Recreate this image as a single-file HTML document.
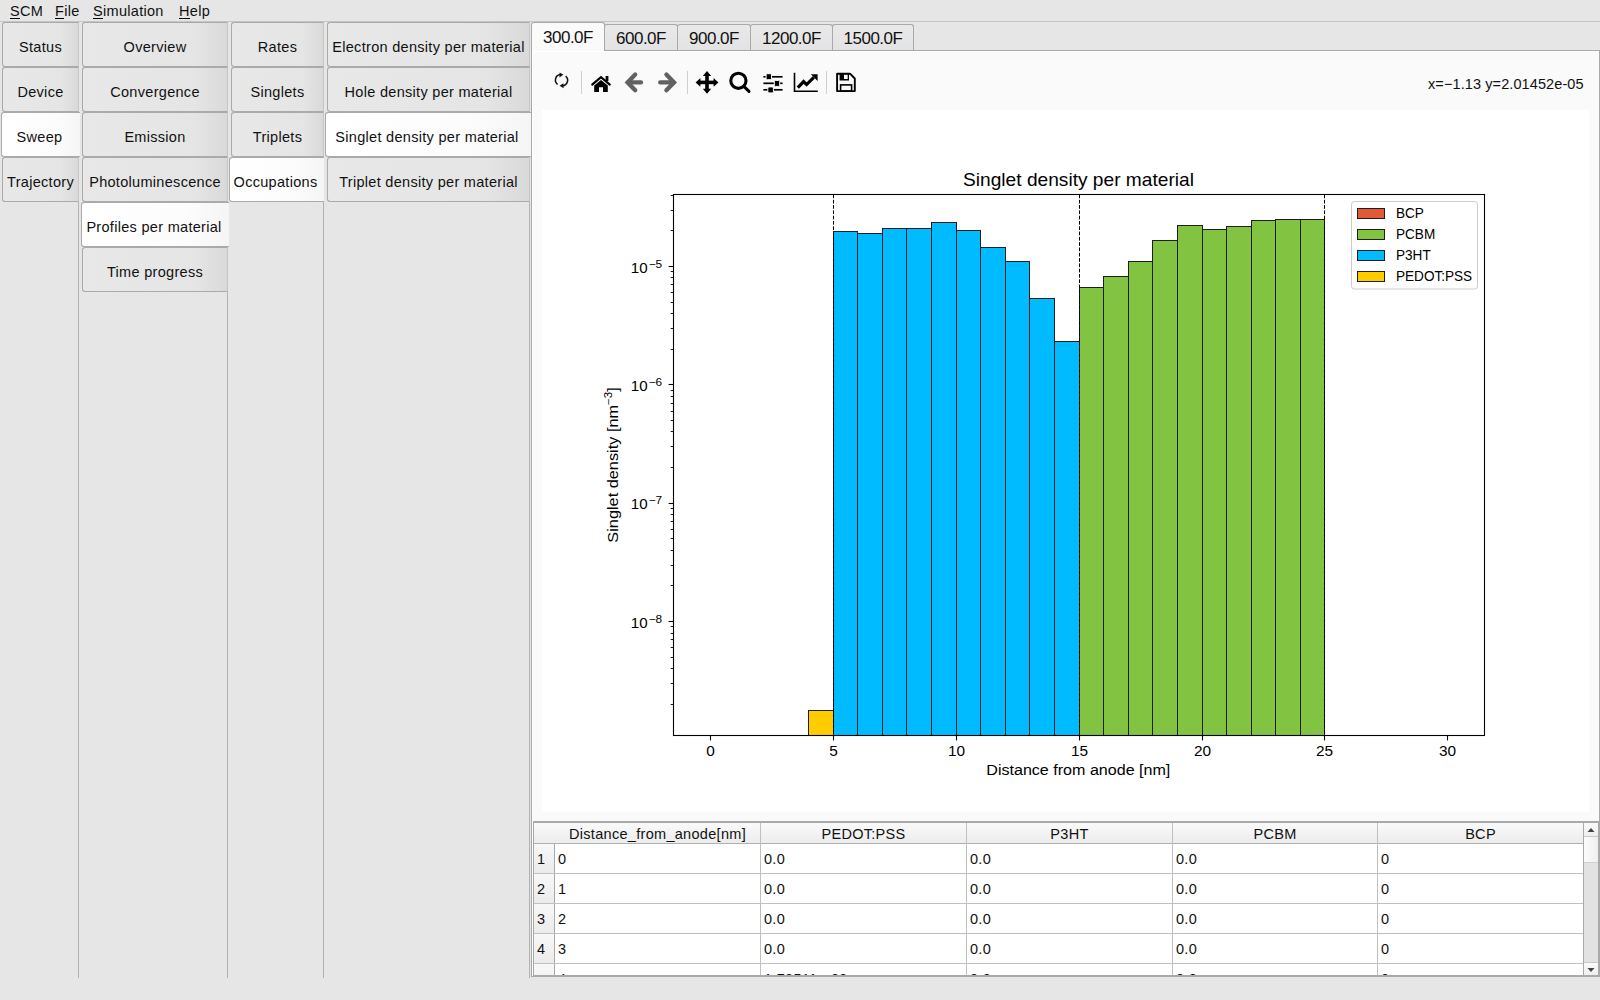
<!DOCTYPE html><html><head><meta charset="utf-8"><style>
*{margin:0;padding:0;box-sizing:border-box}
html,body{width:1600px;height:1000px;overflow:hidden;background:#e6e6e6;font-family:"Liberation Sans",sans-serif;color:#111}
.a{position:absolute}
.menu{position:absolute;font-size:14.5px;letter-spacing:0.3px;top:3px;height:16px;line-height:16px;white-space:nowrap}
.menu u{text-decoration:none;border-bottom:1.5px solid #000;display:inline-block;line-height:14px}
.vl{position:absolute;width:1px;background:#b2b2b2}
.tab{position:absolute;height:45px;border:1px solid #aaaaaa;border-right-color:#c6c6c6;border-radius:3px 0 0 3px;background:linear-gradient(to right,#e8e8e8 0%,#e5e5e5 78%,#d9d9d9 100%);font-size:14.5px;letter-spacing:0.3px;text-align:center;line-height:49px;white-space:nowrap}
.tab.sel{background:linear-gradient(to right,#ffffff 0%,#fcfcfc 70%,#f5f5f5 100%);border-right:none;padding-right:3px}
.ttab{position:absolute;top:24px;height:27px;border:1px solid #a9a9a9;border-bottom:none;border-radius:3px 3px 0 0;background:linear-gradient(#e9e9e9,#e3e3e3);font-size:17px;letter-spacing:-0.5px;text-align:center;line-height:28px;white-space:nowrap}
.ttab.sel{top:22px;height:29px;background:#fafafa;line-height:30px;z-index:3}
.hd{position:absolute;top:823px;height:20px;font-size:14.5px;letter-spacing:0.3px;line-height:21px;text-align:center;white-space:nowrap;background:linear-gradient(#fafafa,#ececec)}
.cell{position:absolute;font-size:14.5px;letter-spacing:0.3px;white-space:nowrap;line-height:16px}
svg text{font-family:"Liberation Sans",sans-serif;fill:#000}
</style></head><body>
<div class="menu" style="left:10px"><u>S</u>CM</div>
<div class="menu" style="left:55px"><u>F</u>ile</div>
<div class="menu" style="left:93px"><u>S</u>imulation</div>
<div class="menu" style="left:179px"><u>H</u>elp</div>
<div class="a" style="left:0;top:21px;width:1600px;height:1px;background:#c4c4c4"></div>
<div class="vl" style="left:78px;top:22px;height:956px"></div>
<div class="vl" style="left:227px;top:22px;height:956px"></div>
<div class="vl" style="left:323px;top:22px;height:956px"></div>
<div class="vl" style="left:529px;top:22px;height:956px"></div>
<div class="tab" style="left:2px;top:22px;width:77px">Status</div>
<div class="tab" style="left:2px;top:67px;width:77px">Device</div>
<div class="tab sel" style="left:1px;top:112px;width:79px;z-index:2">Sweep</div>
<div class="tab" style="left:2px;top:157px;width:77px">Trajectory</div>
<div class="tab" style="left:82px;top:22px;width:146px">Overview</div>
<div class="tab" style="left:82px;top:67px;width:146px">Convergence</div>
<div class="tab" style="left:82px;top:112px;width:146px">Emission</div>
<div class="tab" style="left:82px;top:157px;width:146px">Photoluminescence</div>
<div class="tab sel" style="left:81px;top:202px;width:148px;z-index:2">Profiles per material</div>
<div class="tab" style="left:82px;top:247px;width:146px">Time progress</div>
<div class="tab" style="left:231px;top:22px;width:93px">Rates</div>
<div class="tab" style="left:231px;top:67px;width:93px">Singlets</div>
<div class="tab" style="left:231px;top:112px;width:93px">Triplets</div>
<div class="tab sel" style="left:229px;top:157px;width:95px;z-index:2">Occupations</div>
<div class="tab" style="left:327px;top:22px;width:203px">Electron density per material</div>
<div class="tab" style="left:327px;top:67px;width:203px">Hole density per material</div>
<div class="tab sel" style="left:325px;top:112px;width:206px;z-index:2">Singlet density per material</div>
<div class="tab" style="left:327px;top:157px;width:203px">Triplet density per material</div>
<div class="ttab sel" style="left:531px;width:74px">300.0F</div>
<div class="ttab" style="left:604px;width:74px">600.0F</div>
<div class="ttab" style="left:677px;width:74px">900.0F</div>
<div class="ttab" style="left:750px;width:83px">1200.0F</div>
<div class="ttab" style="left:832px;width:82px">1500.0F</div>
<div class="a" style="left:531px;top:50px;width:1069px;height:927px;border:1px solid #a9a9a9;background:#fafafa;box-shadow:inset 1px 1px 0 #fff"></div>
<div class="a" style="left:542px;top:110px;width:1047px;height:702px;background:#fff"></div>
<div class="a" style="left:1428px;top:76px;font-size:14.5px;letter-spacing:0.1px;line-height:16px;white-space:nowrap">x=−1.13 y=2.01452e-05</div>
<svg class="a" style="left:0;top:0" width="1600" height="1000" viewBox="0 0 1600 1000"><g id="toolbar"><g fill="none" stroke="#111" stroke-width="1.5"><path d="M560.5 74.6 A5.4 5.4 0 0 0 557.6 84.3"/><path d="M565.6 76.2 A5.4 5.4 0 0 1 562.5 85.8"/></g><path d="M559.6 72.4 L563.4 74.8 L559.4 77.4 Z" fill="#111"/><path d="M563.4 83.2 L559.6 85.8 L563.6 88.2 Z" fill="#111"/><line x1="581.5" y1="71" x2="581.5" y2="94" stroke="#cfcfcf" stroke-width="1"/><line x1="687.5" y1="71" x2="687.5" y2="94" stroke="#cfcfcf" stroke-width="1"/><line x1="826.5" y1="71" x2="826.5" y2="94" stroke="#cfcfcf" stroke-width="1"/><polyline points="592.2,84.6 601,77.2 609.8,84.6" fill="none" stroke="#000" stroke-width="2.1" stroke-linecap="round"/><rect x="605.6" y="76" width="2.8" height="5" fill="#000"/><path d="M594.2 92 L594.2 85.6 L601 80 L607.8 85.6 L607.8 92 L603 92 L603 87.3 L599 87.3 L599 92 Z" fill="#000"/><g stroke="#616161" stroke-width="4.3" stroke-linecap="round" fill="none"><polyline points="635.2,74.6 627.6,82.4 635.2,90.2" stroke-linejoin="miter"/><line x1="628" y1="82.4" x2="641" y2="82.4"/><polyline points="666.4,74.6 674,82.4 666.4,90.2" stroke-linejoin="miter"/><line x1="673.6" y1="82.4" x2="660.2" y2="82.4"/></g><g fill="#000"><rect x="705.2" y="75" width="3.6" height="15"/><rect x="699.5" y="80.6" width="15" height="3.6"/><path d="M702.8 76 L711.2 76 L707 71 Z M702.8 88.8 L711.2 88.8 L707 93.8 Z M700.4 78 L700.4 86.8 L695.6 82.4 Z M713.6 78 L713.6 86.8 L718.4 82.4 Z"/></g><circle cx="738.4" cy="80.8" r="7.6" fill="none" stroke="#000" stroke-width="3.1"/><line x1="743.8" y1="86.4" x2="749" y2="91.4" stroke="#000" stroke-width="3" stroke-linecap="round"/><g stroke="#000" stroke-width="1.7"><line x1="763.4" y1="76.8" x2="782.6" y2="76.8"/><line x1="763.4" y1="83.3" x2="782.6" y2="83.3"/><line x1="763.4" y1="89.8" x2="782.6" y2="89.8"/></g><g fill="#000" stroke="#fafafa" stroke-width="1"><rect x="766.1" y="73.7" width="5.4" height="6" rx="1.2"/><rect x="774.3" y="80.4" width="5.4" height="6" rx="1.2"/><rect x="767.8" y="86.9" width="5.6" height="6" rx="1.2"/></g><path d="M794.5 72.8 L794.5 91.2 L817.8 91.2" fill="none" stroke="#000" stroke-width="1.6"/><polyline points="797.8,87.6 803.6,81.6 806.6,84.6 813.8,77.4" fill="none" stroke="#000" stroke-width="3.2" stroke-linejoin="miter"/><path d="M810.8 74.2 L817.6 74.2 L817.6 81 Z" fill="#000"/><path d="M837.1 73.7 L850 73.7 L854.8 78.5 L854.8 91.1 L837.1 91.1 Z" fill="none" stroke="#000" stroke-width="1.9" stroke-linejoin="round"/><path d="M839.6 73.5 L849 73.5 L849 80.6 L839.6 80.6 Z M844 74.3 L844 79.1 L847.7 79.1 L847.7 74.3 Z" fill="#000" fill-rule="evenodd"/><rect x="840.6" y="84.9" width="11" height="6.2" fill="none" stroke="#000" stroke-width="1.6"/></g><clipPath id="ax"><rect x="672.82" y="194.5" width="811.47" height="540.80"/></clipPath><g clip-path="url(#ax)"><rect x="808.5" y="710.5" width="25.0" height="29.80" fill="#ffcc00" stroke="#1e1e1e" stroke-width="1"/><rect x="833.5" y="231.5" width="24.0" height="508.80" fill="#00bbff" stroke="#1e1e1e" stroke-width="1"/><rect x="857.5" y="233.5" width="25.0" height="506.80" fill="#00bbff" stroke="#1e1e1e" stroke-width="1"/><rect x="882.5" y="228.5" width="24.0" height="511.80" fill="#00bbff" stroke="#1e1e1e" stroke-width="1"/><rect x="906.5" y="228.5" width="25.0" height="511.80" fill="#00bbff" stroke="#1e1e1e" stroke-width="1"/><rect x="931.5" y="222.5" width="25.0" height="517.80" fill="#00bbff" stroke="#1e1e1e" stroke-width="1"/><rect x="956.5" y="230.5" width="24.0" height="509.80" fill="#00bbff" stroke="#1e1e1e" stroke-width="1"/><rect x="980.5" y="247.5" width="25.0" height="492.80" fill="#00bbff" stroke="#1e1e1e" stroke-width="1"/><rect x="1005.5" y="261.5" width="24.0" height="478.80" fill="#00bbff" stroke="#1e1e1e" stroke-width="1"/><rect x="1029.5" y="298.5" width="25.0" height="441.80" fill="#00bbff" stroke="#1e1e1e" stroke-width="1"/><rect x="1054.5" y="341.5" width="25.0" height="398.80" fill="#00bbff" stroke="#1e1e1e" stroke-width="1"/><rect x="1079.5" y="287.5" width="24.0" height="452.80" fill="#82c341" stroke="#1e1e1e" stroke-width="1"/><rect x="1103.5" y="276.5" width="25.0" height="463.80" fill="#82c341" stroke="#1e1e1e" stroke-width="1"/><rect x="1128.5" y="261.5" width="24.0" height="478.80" fill="#82c341" stroke="#1e1e1e" stroke-width="1"/><rect x="1152.5" y="240.5" width="25.0" height="499.80" fill="#82c341" stroke="#1e1e1e" stroke-width="1"/><rect x="1177.5" y="225.5" width="25.0" height="514.80" fill="#82c341" stroke="#1e1e1e" stroke-width="1"/><rect x="1202.5" y="229.5" width="24.0" height="510.80" fill="#82c341" stroke="#1e1e1e" stroke-width="1"/><rect x="1226.5" y="226.5" width="25.0" height="513.80" fill="#82c341" stroke="#1e1e1e" stroke-width="1"/><rect x="1251.5" y="220.5" width="24.0" height="519.80" fill="#82c341" stroke="#1e1e1e" stroke-width="1"/><rect x="1275.5" y="219.5" width="25.0" height="520.80" fill="#82c341" stroke="#1e1e1e" stroke-width="1"/><rect x="1300.5" y="219.5" width="24.0" height="520.80" fill="#82c341" stroke="#1e1e1e" stroke-width="1"/><line x1="833.5" y1="194.5" x2="833.5" y2="735.3" stroke="#000" stroke-width="1" stroke-dasharray="3.7,1.6"/><line x1="1079.5" y1="194.5" x2="1079.5" y2="735.3" stroke="#000" stroke-width="1" stroke-dasharray="3.7,1.6"/><line x1="1324.5" y1="194.5" x2="1324.5" y2="735.3" stroke="#000" stroke-width="1" stroke-dasharray="3.7,1.6"/></g><rect x="673.5" y="194.5" width="811" height="541" fill="none" stroke="#000" stroke-width="1.1"/><line x1="710.5" y1="735.5" x2="710.5" y2="740.4" stroke="#000" stroke-width="1.1"/><text transform="translate(710.5,756) scale(1.1,1)" font-size="14" text-anchor="middle">0</text><line x1="833.5" y1="735.5" x2="833.5" y2="740.4" stroke="#000" stroke-width="1.1"/><text transform="translate(833.5,756) scale(1.1,1)" font-size="14" text-anchor="middle">5</text><line x1="956.5" y1="735.5" x2="956.5" y2="740.4" stroke="#000" stroke-width="1.1"/><text transform="translate(956.5,756) scale(1.1,1)" font-size="14" text-anchor="middle">10</text><line x1="1079.5" y1="735.5" x2="1079.5" y2="740.4" stroke="#000" stroke-width="1.1"/><text transform="translate(1079.5,756) scale(1.1,1)" font-size="14" text-anchor="middle">15</text><line x1="1202.5" y1="735.5" x2="1202.5" y2="740.4" stroke="#000" stroke-width="1.1"/><text transform="translate(1202.5,756) scale(1.1,1)" font-size="14" text-anchor="middle">20</text><line x1="1324.5" y1="735.5" x2="1324.5" y2="740.4" stroke="#000" stroke-width="1.1"/><text transform="translate(1324.5,756) scale(1.1,1)" font-size="14" text-anchor="middle">25</text><line x1="1447.5" y1="735.5" x2="1447.5" y2="740.4" stroke="#000" stroke-width="1.1"/><text transform="translate(1447.5,756) scale(1.1,1)" font-size="14" text-anchor="middle">30</text><line x1="670.7" y1="704.5" x2="673.5" y2="704.5" stroke="#000" stroke-width="0.9"/><line x1="670.7" y1="683.5" x2="673.5" y2="683.5" stroke="#000" stroke-width="0.9"/><line x1="670.7" y1="668.5" x2="673.5" y2="668.5" stroke="#000" stroke-width="0.9"/><line x1="670.7" y1="657.5" x2="673.5" y2="657.5" stroke="#000" stroke-width="0.9"/><line x1="670.7" y1="647.5" x2="673.5" y2="647.5" stroke="#000" stroke-width="0.9"/><line x1="670.7" y1="639.5" x2="673.5" y2="639.5" stroke="#000" stroke-width="0.9"/><line x1="670.7" y1="633.5" x2="673.5" y2="633.5" stroke="#000" stroke-width="0.9"/><line x1="670.7" y1="626.5" x2="673.5" y2="626.5" stroke="#000" stroke-width="0.9"/><line x1="668.6" y1="621.5" x2="673.5" y2="621.5" stroke="#000" stroke-width="1.1"/><text transform="translate(647.6,627.74) scale(1.08,1)" font-size="14" text-anchor="end">10</text><text transform="translate(662.2,622.74) scale(1.12,1)" font-size="10.6" text-anchor="end">−8</text><line x1="670.7" y1="585.5" x2="673.5" y2="585.5" stroke="#000" stroke-width="0.9"/><line x1="670.7" y1="565.5" x2="673.5" y2="565.5" stroke="#000" stroke-width="0.9"/><line x1="670.7" y1="550.5" x2="673.5" y2="550.5" stroke="#000" stroke-width="0.9"/><line x1="670.7" y1="538.5" x2="673.5" y2="538.5" stroke="#000" stroke-width="0.9"/><line x1="670.7" y1="529.5" x2="673.5" y2="529.5" stroke="#000" stroke-width="0.9"/><line x1="670.7" y1="521.5" x2="673.5" y2="521.5" stroke="#000" stroke-width="0.9"/><line x1="670.7" y1="514.5" x2="673.5" y2="514.5" stroke="#000" stroke-width="0.9"/><line x1="670.7" y1="508.5" x2="673.5" y2="508.5" stroke="#000" stroke-width="0.9"/><line x1="668.6" y1="503.5" x2="673.5" y2="503.5" stroke="#000" stroke-width="1.1"/><text transform="translate(647.6,509.40) scale(1.08,1)" font-size="14" text-anchor="end">10</text><text transform="translate(662.2,504.40) scale(1.12,1)" font-size="10.6" text-anchor="end">−7</text><line x1="670.7" y1="467.5" x2="673.5" y2="467.5" stroke="#000" stroke-width="0.9"/><line x1="670.7" y1="446.5" x2="673.5" y2="446.5" stroke="#000" stroke-width="0.9"/><line x1="670.7" y1="431.5" x2="673.5" y2="431.5" stroke="#000" stroke-width="0.9"/><line x1="670.7" y1="420.5" x2="673.5" y2="420.5" stroke="#000" stroke-width="0.9"/><line x1="670.7" y1="411.5" x2="673.5" y2="411.5" stroke="#000" stroke-width="0.9"/><line x1="670.7" y1="403.5" x2="673.5" y2="403.5" stroke="#000" stroke-width="0.9"/><line x1="670.7" y1="396.5" x2="673.5" y2="396.5" stroke="#000" stroke-width="0.9"/><line x1="670.7" y1="390.5" x2="673.5" y2="390.5" stroke="#000" stroke-width="0.9"/><line x1="668.6" y1="384.5" x2="673.5" y2="384.5" stroke="#000" stroke-width="1.1"/><text transform="translate(647.6,391.06) scale(1.08,1)" font-size="14" text-anchor="end">10</text><text transform="translate(662.2,386.06) scale(1.12,1)" font-size="10.6" text-anchor="end">−6</text><line x1="670.7" y1="349.5" x2="673.5" y2="349.5" stroke="#000" stroke-width="0.9"/><line x1="670.7" y1="328.5" x2="673.5" y2="328.5" stroke="#000" stroke-width="0.9"/><line x1="670.7" y1="313.5" x2="673.5" y2="313.5" stroke="#000" stroke-width="0.9"/><line x1="670.7" y1="302.5" x2="673.5" y2="302.5" stroke="#000" stroke-width="0.9"/><line x1="670.7" y1="292.5" x2="673.5" y2="292.5" stroke="#000" stroke-width="0.9"/><line x1="670.7" y1="284.5" x2="673.5" y2="284.5" stroke="#000" stroke-width="0.9"/><line x1="670.7" y1="277.5" x2="673.5" y2="277.5" stroke="#000" stroke-width="0.9"/><line x1="670.7" y1="271.5" x2="673.5" y2="271.5" stroke="#000" stroke-width="0.9"/><line x1="668.6" y1="266.5" x2="673.5" y2="266.5" stroke="#000" stroke-width="1.1"/><text transform="translate(647.6,272.72) scale(1.08,1)" font-size="14" text-anchor="end">10</text><text transform="translate(662.2,267.72) scale(1.12,1)" font-size="10.6" text-anchor="end">−5</text><line x1="670.7" y1="230.5" x2="673.5" y2="230.5" stroke="#000" stroke-width="0.9"/><line x1="670.7" y1="210.5" x2="673.5" y2="210.5" stroke="#000" stroke-width="0.9"/><line x1="670.7" y1="195.5" x2="673.5" y2="195.5" stroke="#000" stroke-width="0.9"/><text transform="translate(1078.5,186) scale(1.064,1)" font-size="18" text-anchor="middle">Singlet density per material</text><text transform="translate(1078.3,775.1) scale(1.11,1)" font-size="14.5" text-anchor="middle">Distance from anode [nm]</text><text transform="translate(617.8,465) rotate(-90) scale(1.125,1)" font-size="14.5" text-anchor="middle">Singlet density [nm<tspan font-size="10.2" dy="-6">−3</tspan><tspan dy="6">]</tspan></text><rect x="1351.5" y="201.5" width="126" height="87.5" rx="2.8" fill="#fff" fill-opacity="0.8" stroke="#cccccc" stroke-width="1"/><rect x="1357.5" y="208.5" width="27" height="10" fill="#e05a37" stroke="#1e1e1e" stroke-width="1"/><text transform="translate(1396,218) scale(0.97,1)" font-size="14">BCP</text><rect x="1357.5" y="229.5" width="27" height="10" fill="#82c341" stroke="#1e1e1e" stroke-width="1"/><text transform="translate(1396,239) scale(0.97,1)" font-size="14">PCBM</text><rect x="1357.5" y="250.5" width="27" height="10" fill="#00bbff" stroke="#1e1e1e" stroke-width="1"/><text transform="translate(1396,260) scale(0.97,1)" font-size="14">P3HT</text><rect x="1357.5" y="271.5" width="27" height="10" fill="#ffcc00" stroke="#1e1e1e" stroke-width="1"/><text transform="translate(1396,281) scale(0.97,1)" font-size="14">PEDOT:PSS</text></svg>
<div class="a" style="left:533px;top:821px;width:1066px;height:156px;border:1px solid #a9a9a9;border-top:2px solid #a9a9a9;border-bottom:2px solid #a9a9a9;background:#fff"></div>
<div class="hd" style="left:534px;width:1049px"></div>
<div class="hd" style="left:555px;width:205px;background:none;line-height:23px">Distance_from_anode[nm]</div>
<div class="hd" style="left:761px;width:205px;background:none;line-height:23px">PEDOT:PSS</div>
<div class="hd" style="left:967px;width:205px;background:none;line-height:23px">P3HT</div>
<div class="hd" style="left:1173px;width:204px;background:none;line-height:23px">PCBM</div>
<div class="hd" style="left:1378px;width:205px;background:none;line-height:23px">BCP</div>
<div class="a" style="left:534px;top:843px;width:1049px;height:1px;background:#b0b0b0"></div>
<div class="a" style="left:534px;top:844px;width:20px;height:131px;background:linear-gradient(to right,#f7f7f7,#ececec)"></div>
<div class="a" style="left:760px;top:823px;width:1px;height:152px;background:#c0c0c0"></div>
<div class="a" style="left:966px;top:823px;width:1px;height:152px;background:#c0c0c0"></div>
<div class="a" style="left:1172px;top:823px;width:1px;height:152px;background:#c0c0c0"></div>
<div class="a" style="left:1377px;top:823px;width:1px;height:152px;background:#c0c0c0"></div>
<div class="a" style="left:554px;top:844px;width:1px;height:131px;background:#a9a9a9"></div>
<div class="a" style="left:1583px;top:823px;width:1px;height:152px;background:#a9a9a9"></div>
<div class="a" style="left:534px;top:873px;width:1049px;height:1px;background:#c0c0c0"></div>
<div class="a" style="left:534px;top:903px;width:1049px;height:1px;background:#c0c0c0"></div>
<div class="a" style="left:534px;top:933px;width:1049px;height:1px;background:#c0c0c0"></div>
<div class="a" style="left:534px;top:963px;width:1049px;height:1px;background:#c0c0c0"></div>
<div class="a" style="left:534px;top:844px;width:20px;height:29px;background:linear-gradient(#f8f8f8,#ebebeb)"></div>
<div class="cell" style="left:537px;top:851px">1</div>
<div class="cell" style="left:558px;top:851px">0</div>
<div class="cell" style="left:764px;top:851px">0.0</div>
<div class="cell" style="left:970px;top:851px">0.0</div>
<div class="cell" style="left:1176px;top:851px">0.0</div>
<div class="cell" style="left:1381px;top:851px">0</div>
<div class="a" style="left:534px;top:874px;width:20px;height:29px;background:linear-gradient(#f8f8f8,#ebebeb)"></div>
<div class="cell" style="left:537px;top:881px">2</div>
<div class="cell" style="left:558px;top:881px">1</div>
<div class="cell" style="left:764px;top:881px">0.0</div>
<div class="cell" style="left:970px;top:881px">0.0</div>
<div class="cell" style="left:1176px;top:881px">0.0</div>
<div class="cell" style="left:1381px;top:881px">0</div>
<div class="a" style="left:534px;top:904px;width:20px;height:29px;background:linear-gradient(#f8f8f8,#ebebeb)"></div>
<div class="cell" style="left:537px;top:911px">3</div>
<div class="cell" style="left:558px;top:911px">2</div>
<div class="cell" style="left:764px;top:911px">0.0</div>
<div class="cell" style="left:970px;top:911px">0.0</div>
<div class="cell" style="left:1176px;top:911px">0.0</div>
<div class="cell" style="left:1381px;top:911px">0</div>
<div class="a" style="left:534px;top:934px;width:20px;height:29px;background:linear-gradient(#f8f8f8,#ebebeb)"></div>
<div class="cell" style="left:537px;top:941px">4</div>
<div class="cell" style="left:558px;top:941px">3</div>
<div class="cell" style="left:764px;top:941px">0.0</div>
<div class="cell" style="left:970px;top:941px">0.0</div>
<div class="cell" style="left:1176px;top:941px">0.0</div>
<div class="cell" style="left:1381px;top:941px">0</div>
<div class="a" style="left:534px;top:964px;width:20px;height:29px;background:linear-gradient(#f8f8f8,#ebebeb)"></div>
<div class="cell" style="left:558px;top:971px">4</div>
<div class="cell" style="left:764px;top:971px">1.78511e-09</div>
<div class="cell" style="left:970px;top:971px">0.0</div>
<div class="cell" style="left:1176px;top:971px">0.0</div>
<div class="cell" style="left:1381px;top:971px">0</div>
<div class="a" style="left:533px;top:975px;width:1066px;height:2px;background:#a9a9a9"></div>
<div class="a" style="left:531px;top:977px;width:1069px;height:23px;background:#e6e6e6"></div>
<div class="a" style="left:1584px;top:823px;width:14px;height:152px;background:#e2e2e2"></div>
<div class="a" style="left:1584px;top:823px;width:14px;height:14px;background:linear-gradient(#fafafa,#eeeeee);border-bottom:1px solid #c8c8c8"></div>
<div class="a" style="left:1584px;top:837px;width:14px;height:26px;background:linear-gradient(to right,#fbfbfb,#f0f0f0);border-bottom:1px solid #cfcfcf"></div>
<div class="a" style="left:1584px;top:962px;width:14px;height:13px;background:linear-gradient(#fafafa,#eeeeee);border-top:1px solid #c8c8c8"></div>
<svg class="a" style="left:1584px;top:823px" width="14" height="152"><path d="M3.5 9 L10.5 9 L7 5 Z" fill="#444"/><path d="M3.5 145 L10.5 145 L7 149 Z" fill="#444"/></svg>
</body></html>
